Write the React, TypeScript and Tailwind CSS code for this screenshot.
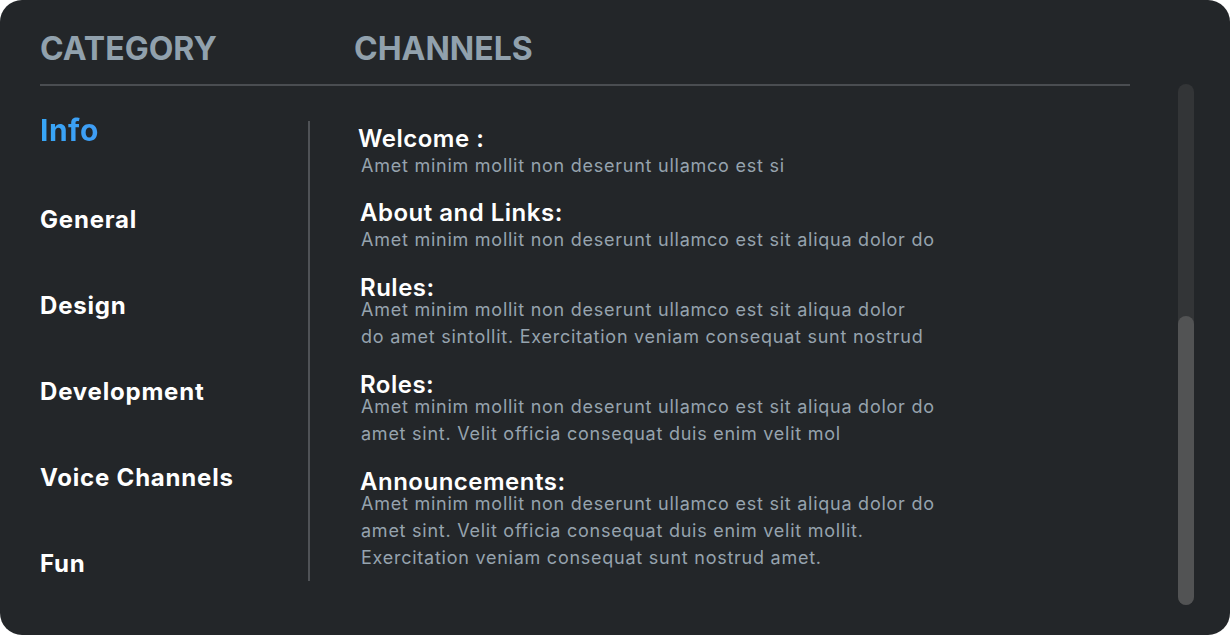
import React from "react";

const CATEGORIES = ["General", "Design", "Development", "Voice Channels", "Fun"];

const CHANNELS: Array<{ title: string; lines: string[]; gap: string; first: string; shift?: string }> = [
  {
    title: "Welcome :",
    lines: ["Amet minim mollit non deserunt ullamco est si"],
    gap: "mt-0",
    first: "mt-[5px]",
    shift: "-ml-[2px]"
  },
  {
    title: "About and Links:",
    lines: ["Amet minim mollit non deserunt ullamco est sit aliqua dolor do"],
    gap: "mt-[26px]",
    first: "mt-[5px]"
  },
  {
    title: "Rules:",
    lines: [
      "Amet minim mollit non deserunt ullamco est sit aliqua dolor",
      "do amet sintollit. Exercitation veniam consequat sunt nostrud"
    ],
    gap: "mt-[27px]",
    first: "mt-0"
  },
  {
    title: "Roles:",
    lines: [
      "Amet minim mollit non deserunt ullamco est sit aliqua dolor do",
      "amet sint. Velit officia consequat duis enim velit mol"
    ],
    gap: "mt-[27px]",
    first: "mt-0"
  },
  {
    title: "Announcements:",
    lines: [
      "Amet minim mollit non deserunt ullamco est sit aliqua dolor do",
      "amet sint. Velit officia consequat duis enim velit mollit.",
      "Exercitation veniam consequat sunt nostrud amet."
    ],
    gap: "mt-[26.5px]",
    first: "mt-0"
  }
];

export default function App() {
  return (
    <div className="h-[635px] w-[1230px] bg-white font-['Inter',sans-serif]">
      <div className="flex h-full w-full rounded-[22px] bg-[#232629]">
        <div className="flex w-[1130px] flex-col pl-10">
          {/* header */}
          <div className="flex h-[84px] items-start pt-[29px] text-[32px] font-bold leading-[40px] text-[#91a1ad]">
            <div className="w-[314px]">CATEGORY</div>
            <div>CHANNELS</div>
          </div>
          <div className="h-[2px] bg-[#4a4d51]" />

          <div className="flex">
            {/* categories */}
            <div className="w-[268px] pt-[26px]">
              <div className="bg-gradient-to-r from-[#37a6f6] to-[#507bf0] bg-clip-text text-[30px] font-bold leading-[36px] tracking-[0.5px] text-transparent">
                Info
              </div>
              <div className="mt-[57px] flex flex-col gap-[56px] text-[24px] font-bold leading-[30px] tracking-[0.8px] text-white">
                {CATEGORIES.map((c) => (
                  <div key={c}>{c}</div>
                ))}
              </div>
            </div>

            <div className="mt-[35px] h-[460px] w-[2px] bg-[#4f5256]" />

            {/* channels */}
            <div className="pl-[50px] pt-[45px]">
              {CHANNELS.map((ch) => (
                <div key={ch.title} className={ch.gap}>
                  <div className={`${ch.shift ?? ""} text-[24px] font-semibold leading-[16px] tracking-[0.5px] text-white`}>
                    {ch.title}
                  </div>
                  <div className={`${ch.first} pl-[1px] text-[18px] leading-[27px] tracking-[0.75px] text-[#96a3ae]`}>
                    {ch.lines.map((l) => (
                      <div key={l}>{l}</div>
                    ))}
                  </div>
                </div>
              ))}
            </div>
          </div>
        </div>

        {/* scrollbar */}
        <div className="ml-[48px] mt-[84px] flex h-[521px] w-4 flex-col rounded-full bg-[#333537]">
          <div className="mt-[232px] flex-1 rounded-full bg-[#525354]" />
        </div>
      </div>
    </div>
  );
}
